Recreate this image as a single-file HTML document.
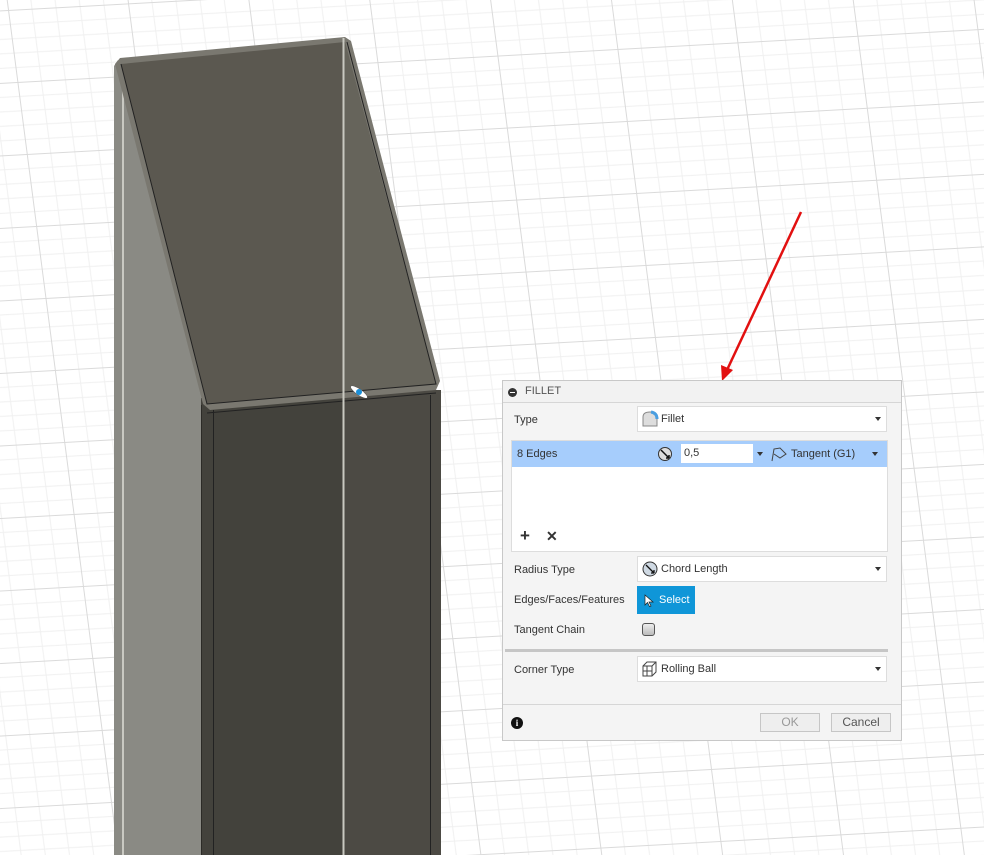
<!DOCTYPE html>
<html><head><meta charset="utf-8"><style>
*{box-sizing:border-box;margin:0;padding:0}
body{width:984px;height:855px;overflow:hidden;background:#fff;font-family:"Liberation Sans",sans-serif;font-size:11px;color:#333;position:relative}
svg.bg{position:absolute;left:0;top:0}
.dlg{position:absolute;left:502px;top:380px;width:400px;height:361px;background:#f4f4f4;border:1px solid #c8c8c8}
.hdr{height:22px;border-bottom:1px solid #d6d6d6;background:#f2f2f2;color:#555;padding-left:22px;line-height:21px;font-size:11px;position:relative}
.hdr:before{content:"";position:absolute;left:5px;top:7px;width:9px;height:9px;border-radius:50%;background:#333}
.hdr:after{content:"";position:absolute;left:7px;top:11px;width:5px;height:1px;background:#fff}
.lbl{position:absolute;left:11px}
.dd{position:absolute;left:134px;width:250px;height:26px;background:#fff;border:1px solid #ddd;line-height:24px;padding-left:23px}
.dd .ar{position:absolute;right:5px;top:10px;width:0;height:0;border-left:3px solid transparent;border-right:3px solid transparent;border-top:4px solid #333}
.dd svg{position:absolute;left:3px;top:3px}
.list{position:absolute;left:8px;top:59px;width:377px;height:112px;background:#fff;border:1px solid #ddd}
.row{height:26px;background:#a6cdfc;position:relative;line-height:26px;padding-left:5px;color:#333}
.inp{position:absolute;left:169px;top:3px;width:72px;height:19px;background:#fff;line-height:18px;padding-left:3px}
.sel{position:absolute;left:134px;top:205px;width:58px;height:28px;background:#0f96d8;color:#fff;line-height:28px;padding-left:22px}
.btn{position:absolute;top:332px;height:19px;border:1px solid #c6c6c6;background:#eee;color:#999;text-align:center;line-height:17px;font-size:12px}
</style></head><body>
<svg class="bg" width="984" height="855">
<defs>
<pattern id="g" width="120" height="72" patternUnits="userSpaceOnUse" patternTransform="matrix(1,-0.055,0.13,1,8,10)">
<g stroke="#f0f0f0" stroke-width="1">
<line x1="24" y1="0" x2="24" y2="72"/><line x1="48" y1="0" x2="48" y2="72"/><line x1="72" y1="0" x2="72" y2="72"/><line x1="96" y1="0" x2="96" y2="72"/>
<line x1="0" y1="14.4" x2="120" y2="14.4"/><line x1="0" y1="28.8" x2="120" y2="28.8"/><line x1="0" y1="43.2" x2="120" y2="43.2"/><line x1="0" y1="57.6" x2="120" y2="57.6"/>
</g>
<g stroke="#dadada" stroke-width="1"><line x1="0.5" y1="0" x2="0.5" y2="72"/><line x1="0" y1="0.5" x2="120" y2="0.5"/></g>
</pattern>
</defs>
<rect width="984" height="855" fill="url(#g)"/>
<!-- left face -->
<polygon points="114,66 118,60 205,400 201,855 114,855" fill="#8a8a84"/>
<line x1="123" y1="80" x2="123" y2="855" stroke="#c9c9c2" stroke-width="2"/>
<!-- front face -->
<rect x="201" y="398" width="240" height="457" fill="#43423c"/>
<rect x="343" y="390" width="98" height="465" fill="#4c4a44"/>
<line x1="213.5" y1="410" x2="213.5" y2="855" stroke="#222" stroke-width="1"/>
<line x1="430.5" y1="395" x2="430.5" y2="855" stroke="#222" stroke-width="1"/>
<line x1="201.5" y1="405" x2="201.5" y2="855" stroke="#2c2b27" stroke-width="1"/>
<!-- top face -->
<polygon points="115,64 120,58 345,37 351,41 440,381 436,390 210,410 203,404" fill="#7a7870"/>
<polygon points="121,64 345,42 436,384 207,404" fill="#5b5850"/>
<polygon points="343,42 345,42 436,384 343,392" fill="#66645b"/>
<polyline points="121,64 207,404 436,384 347,42" fill="none" stroke="#222" stroke-width="1"/>
<line x1="207" y1="413" x2="436" y2="393" stroke="#222" stroke-width="1"/>
<line x1="343.5" y1="38" x2="343.5" y2="855" stroke="#c8c8c0" stroke-width="2"/>
<ellipse cx="359" cy="392" rx="10" ry="3" transform="rotate(35 359 392)" fill="#fff" stroke="#555" stroke-width="0.5"/>
<circle cx="359" cy="392" r="3" fill="#1a8fd8"/>
<!-- red arrow -->
<line x1="801" y1="212" x2="727" y2="370" stroke="#e21010" stroke-width="2.5"/>
<polygon points="722,381 721,365 733,370" fill="#e21010"/>
</svg>
<div class="dlg">
<div class="hdr">FILLET</div>
<div class="lbl" style="top:33px">Type</div>
<div class="dd" style="top:25px"><svg width="18" height="18"><path d="M2 16 V7 Q2 2 9 2 H11 Q16 3 16 9 V16 Z" fill="#ddd" stroke="#888"/><path d="M10 2 Q16 3 16 9" fill="none" stroke="#4a9ee0" stroke-width="3"/></svg>Fillet<span class="ar"></span></div>
<div class="list"><div class="row">8 Edges
<svg style="position:absolute;left:145px;top:5px" width="16" height="16"><circle cx="8" cy="8" r="6.5" fill="#ddd" stroke="#333"/><path d="M4 4 L12 12 M12 12 L9 12 M12 12 L12 9" stroke="#111" stroke-width="1.5" fill="none"/></svg>
<div class="inp">0,5</div><span style="position:absolute;left:245px;top:11px;border-left:3px solid transparent;border-right:3px solid transparent;border-top:4px solid #333"></span>
<svg style="position:absolute;left:258px;top:5px" width="18" height="17"><path d="M2 15 L4 3 L10 2 L16 8 L10 12 L4 8" fill="none" stroke="#444"/></svg>
<span style="position:absolute;left:279px">Tangent (G1)</span><span style="position:absolute;left:360px;top:11px;border-left:3px solid transparent;border-right:3px solid transparent;border-top:4px solid #333"></span></div>
<span style="position:absolute;left:8px;top:85px;font-size:17px;font-weight:bold;color:#333">+</span>
<span style="position:absolute;left:34px;top:87px;font-size:14px;font-weight:bold;color:#333">✕</span></div>
<div class="lbl" style="top:183px">Radius Type</div>
<div class="dd" style="top:175px"><svg width="18" height="18"><circle cx="9" cy="9" r="7" fill="#cfd9e3" stroke="#333"/><path d="M5 5 L13 13 M13 13 L10 13 M13 13 L13 10" stroke="#111" stroke-width="1.3" fill="none"/></svg>Chord Length<span class="ar"></span></div>
<div class="lbl" style="top:213px">Edges/Faces/Features</div>
<div class="sel"><svg style="position:absolute;left:7px;top:8px" width="10" height="13"><path d="M1 1 L1 11 L3.5 8.5 L5.5 12.5 L7 12 L5 8 L9 8 Z" fill="#fff" stroke="#222" stroke-width="0.7"/></svg>Select</div>
<div class="lbl" style="top:243px">Tangent Chain</div>
<div style="position:absolute;left:139px;top:242px;width:13px;height:13px;border:1px solid #555;border-radius:3px;background:linear-gradient(#eee,#bbb)"></div>
<div style="position:absolute;left:2px;top:268px;width:383px;height:3px;background:#c6c6c6"></div>
<div class="lbl" style="top:283px">Corner Type</div>
<div class="dd" style="top:275px"><svg width="18" height="18"><path d="M2 6 L6 2 H15 V12 L11 16 H2 Z M2 6 H11 V16 M11 6 L15 2 M2 11 H11 M6 6 V16" fill="#fff" stroke="#444"/></svg>Rolling Ball<span class="ar"></span></div>
<div style="position:absolute;left:0;top:323px;width:398px;height:1px;background:#d6d6d6"></div>
<div style="position:absolute;left:8px;top:336px;width:12px;height:12px;border-radius:50%;background:#111;color:#fff;font-size:9px;font-weight:bold;text-align:center;line-height:12px;font-family:'Liberation Serif',serif">i</div>
<div class="btn" style="left:257px;width:60px">OK</div>
<div class="btn" style="left:328px;width:60px;color:#555">Cancel</div>
</div>
</body></html>
